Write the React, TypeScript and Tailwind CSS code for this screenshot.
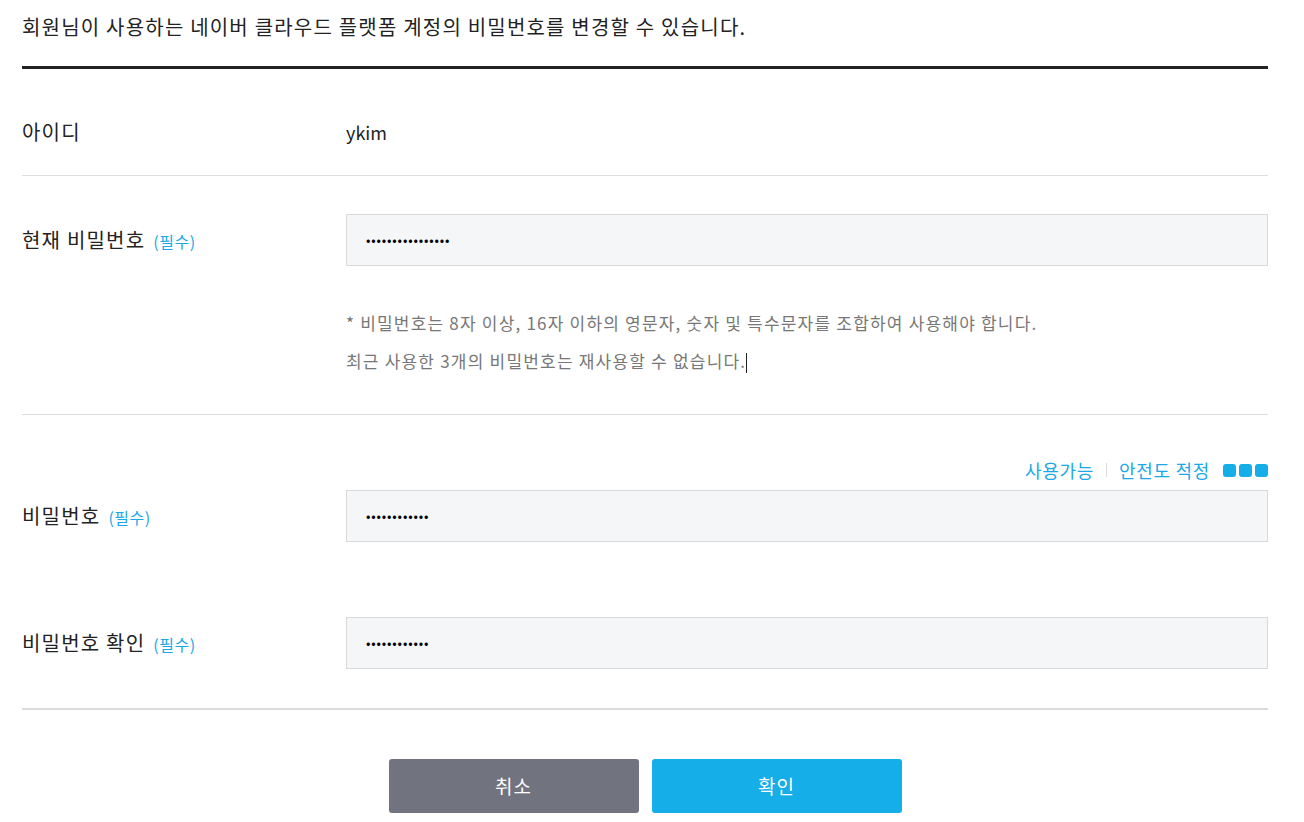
const font = "font-['Noto_Sans_CJK_KR','Noto_Sans',sans-serif]";

function Required() {
  return <span className="ml-[8px] text-[16px] tracking-[0.5px] text-[#1ba8e6]">(필수)</span>;
}

function PwInput({ dots }: { dots: string }) {
  return (
    <div className="flex h-[52px] flex-1 items-center border border-[#d9d9d9] bg-[#f5f6f8] px-[19px] text-[13px] tracking-[0.85px] text-black">
      {dots}
    </div>
  );
}

export default function App() {
  return (
    <div className={`${font} w-[1246px] ml-[22px] text-[#222]`}>
      <p className="pt-[12px] pb-[24px] text-[20px] leading-[30px] tracking-[1.2px]">
        회원님이 사용하는 네이버 클라우드 플랫폼 계정의 비밀번호를 변경할 수 있습니다.
      </p>
      <div className="border-b-[3px] border-[#222]" />

      {/* 아이디 */}
      <div className="flex items-baseline border-b border-[#dedede] pt-[48px] pb-[28px]">
        <div className="w-[324px] text-[20px] leading-[30px] tracking-[1.2px]">아이디</div>
        <div className="text-[18px] leading-[30px]">ykim</div>
      </div>

      {/* 현재 비밀번호 */}
      <div className="border-b border-[#dedede] pt-[38px] pb-[34px]">
        <div className="flex items-center">
          <div className="w-[324px] text-[20px] leading-[30px] tracking-[1.2px]">
            현재 비밀번호<Required />
          </div>
          <PwInput dots="••••••••••••••••" />
        </div>
        <div className="ml-[324px] mt-[38px] text-[17px] leading-[38px] tracking-[1.2px] text-[#777]">
          <p>* 비밀번호는 8자 이상, 16자 이하의 영문자, 숫자 및 특수문자를 조합하여 사용해야 합니다.</p>
          <p>
            최근 사용한 3개의 비밀번호는 재사용할 수 없습니다.
            <span className="inline-block h-[20px] w-px bg-[#222] align-middle" />
          </p>
        </div>
      </div>

      {/* 비밀번호 */}
      <div className="border-b-2 border-[#dadada] pt-[42px] pb-[39px]">
        <div className="flex items-center justify-end gap-[12px] text-[18px] leading-[26px] tracking-[0.7px] text-[#1ba8e6]">
          <span>사용가능</span>
          <span className="h-[14px] w-px bg-[#ddd]" />
          <span>안전도 적정</span>
          <span className="ml-[1px] flex gap-[3px]">
            <span className="h-[13px] w-[13px] rounded-[3px] bg-[#15aee8]" />
            <span className="h-[13px] w-[13px] rounded-[3px] bg-[#15aee8]" />
            <span className="h-[13px] w-[13px] rounded-[3px] bg-[#15aee8]" />
          </span>
        </div>
        <div className="mt-[7px] flex items-center">
          <div className="w-[324px] text-[20px] leading-[30px] tracking-[1.2px]">
            비밀번호<Required />
          </div>
          <PwInput dots="••••••••••••" />
        </div>
        <div className="mt-[75px] flex items-center">
          <div className="w-[324px] text-[20px] leading-[30px] tracking-[1.2px]">
            비밀번호 확인<Required />
          </div>
          <PwInput dots="••••••••••••" />
        </div>
      </div>

      <div className="flex justify-center gap-[13px] pt-[49px]">
        <button className="h-[54px] w-[250px] rounded-[3px] bg-[#71737f] text-[19px] tracking-[1px] text-white">취소</button>
        <button className="h-[54px] w-[250px] rounded-[3px] bg-[#15aee8] text-[19px] tracking-[1px] text-white">확인</button>
      </div>
    </div>
  );
}
